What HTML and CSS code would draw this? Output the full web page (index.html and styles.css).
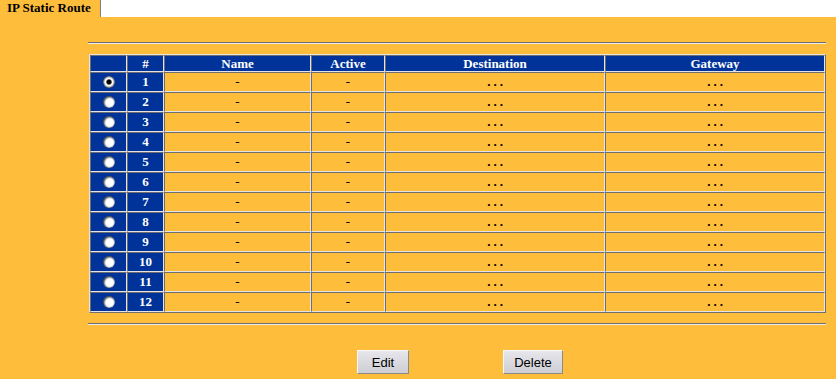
FILE: index.html
```html
<!DOCTYPE html>
<html lang="en">
<head>
    <meta charset="UTF-8">
    <title>IP Static Route</title>
    <link rel="stylesheet" href="styles.css">
</head>
<body>

<div class="tabbar">
    <div class="tab">IP Static Route</div>
</div>

<div class="content">
    <hr class="line">
    <table class="routes">
        <tr>
            <th class="c-sel"></th>
            <th class="c-num">#</th>
            <th class="c-name">Name</th>
            <th class="c-active">Active</th>
            <th class="c-dest">Destination</th>
            <th class="c-gw">Gateway</th>
        </tr>
        <tr><td class="sel"><input type="radio" name="route" checked></td><td class="num">1</td><td>-</td><td>-</td><td class="dots">...</td><td class="dots">...</td></tr>
        <tr><td class="sel"><input type="radio" name="route"></td><td class="num">2</td><td>-</td><td>-</td><td class="dots">...</td><td class="dots">...</td></tr>
        <tr><td class="sel"><input type="radio" name="route"></td><td class="num">3</td><td>-</td><td>-</td><td class="dots">...</td><td class="dots">...</td></tr>
        <tr><td class="sel"><input type="radio" name="route"></td><td class="num">4</td><td>-</td><td>-</td><td class="dots">...</td><td class="dots">...</td></tr>
        <tr><td class="sel"><input type="radio" name="route"></td><td class="num">5</td><td>-</td><td>-</td><td class="dots">...</td><td class="dots">...</td></tr>
        <tr><td class="sel"><input type="radio" name="route"></td><td class="num">6</td><td>-</td><td>-</td><td class="dots">...</td><td class="dots">...</td></tr>
        <tr><td class="sel"><input type="radio" name="route"></td><td class="num">7</td><td>-</td><td>-</td><td class="dots">...</td><td class="dots">...</td></tr>
        <tr><td class="sel"><input type="radio" name="route"></td><td class="num">8</td><td>-</td><td>-</td><td class="dots">...</td><td class="dots">...</td></tr>
        <tr><td class="sel"><input type="radio" name="route"></td><td class="num">9</td><td>-</td><td>-</td><td class="dots">...</td><td class="dots">...</td></tr>
        <tr><td class="sel"><input type="radio" name="route"></td><td class="num">10</td><td>-</td><td>-</td><td class="dots">...</td><td class="dots">...</td></tr>
        <tr><td class="sel"><input type="radio" name="route"></td><td class="num">11</td><td>-</td><td>-</td><td class="dots">...</td><td class="dots">...</td></tr>
        <tr><td class="sel"><input type="radio" name="route"></td><td class="num">12</td><td>-</td><td>-</td><td class="dots">...</td><td class="dots">...</td></tr>
    </table>
    <hr class="line bottom">
    <div class="actions">
        <button class="btn edit">Edit</button>
        <button class="btn delete">Delete</button>
    </div>
</div>

</body>
</html>
```

FILE: styles.css
```css
body {
    margin: 0;
    background-color: #ffbd3c;
    font-family: "Liberation Serif", "Times New Roman", serif;
}

.tabbar {
    height: 17px;
    background-color: #fff;
}

.tab {
    width: 93px;
    height: 17px;
    padding-left: 7px;
    background-color: #ffbd3c;
    border-right: 1px solid #808080;
    font-size: 13px;
    font-weight: bold;
    line-height: 16px;
    color: #000;
}

.content {
    padding: 25px 10px 0 88px;
}

.line {
    margin: 0;
    height: 0;
    border: none;
    border-top: 1px solid #6e6e6e;
    border-bottom: 1px solid #ececec;
}

.line.bottom {
    margin-top: 10px;
}

.routes {
    width: 737px;
    margin: 10px 0 0 1px;
    table-layout: fixed;
    border-collapse: separate;
    border-spacing: 0;
    border: 1px solid;
    border-color: #e4e4e4 #6e6e6e #6e6e6e #e4e4e4;
}

.routes th,
.routes td {
    padding: 0;
    border: 1px solid;
    border-color: #6e6e6e #e4e4e4 #e4e4e4 #6e6e6e;
    text-align: center;
    font-size: 13px;
}

.routes th {
    height: 15px;
    line-height: 15px;
    background-color: #003399;
    color: #fff;
    font-weight: bold;
}

.routes td {
    height: 18px;
    line-height: 18px;
    color: #000;
}

.c-sel, .c-num { width: 35px; }
.c-name { width: 145px; }
.c-active { width: 72px; }
.c-dest, .c-gw { width: 218px; }

.routes td.sel,
.routes td.num {
    background-color: #003399;
    color: #fff;
    font-weight: bold;
}

.routes td.dots {
    font-weight: bold;
    letter-spacing: 3px;
    text-indent: 3px;
}

.sel input {
    appearance: none;
    -webkit-appearance: none;
    display: block;
    width: 12px;
    height: 12px;
    margin: 0 auto;
    border-radius: 50%;
    background: radial-gradient(circle at 55% 55%, #fff 0 3.6px, #d8d8d8 4.4px, #8a8a8a 5.4px, #5a5a5a 6px);
}

.sel input:checked {
    background: radial-gradient(circle at 50% 50%, #000 0 1.8px, #4a4a4a 2.4px, #fff 3.2px 3.6px, #d8d8d8 4.4px, #8a8a8a 5.4px, #5a5a5a 6px);
}

.actions {
    display: flex;
    justify-content: center;
    gap: 94px;
    margin-top: 25px;
    padding-left: 6px;
}

.btn {
    height: 24px;
    padding: 0;
    font-family: "Liberation Sans", Arial, sans-serif;
    font-size: 13px;
    color: #000;
    background: linear-gradient(#e6e6ec, #cdcdd4);
    border: 1px solid;
    border-color: #fafafa #8a8a8a #8a8a8a #fafafa;
    border-radius: 0;
}

.btn.edit { width: 52px; }
.btn.delete { width: 60px; }
```
